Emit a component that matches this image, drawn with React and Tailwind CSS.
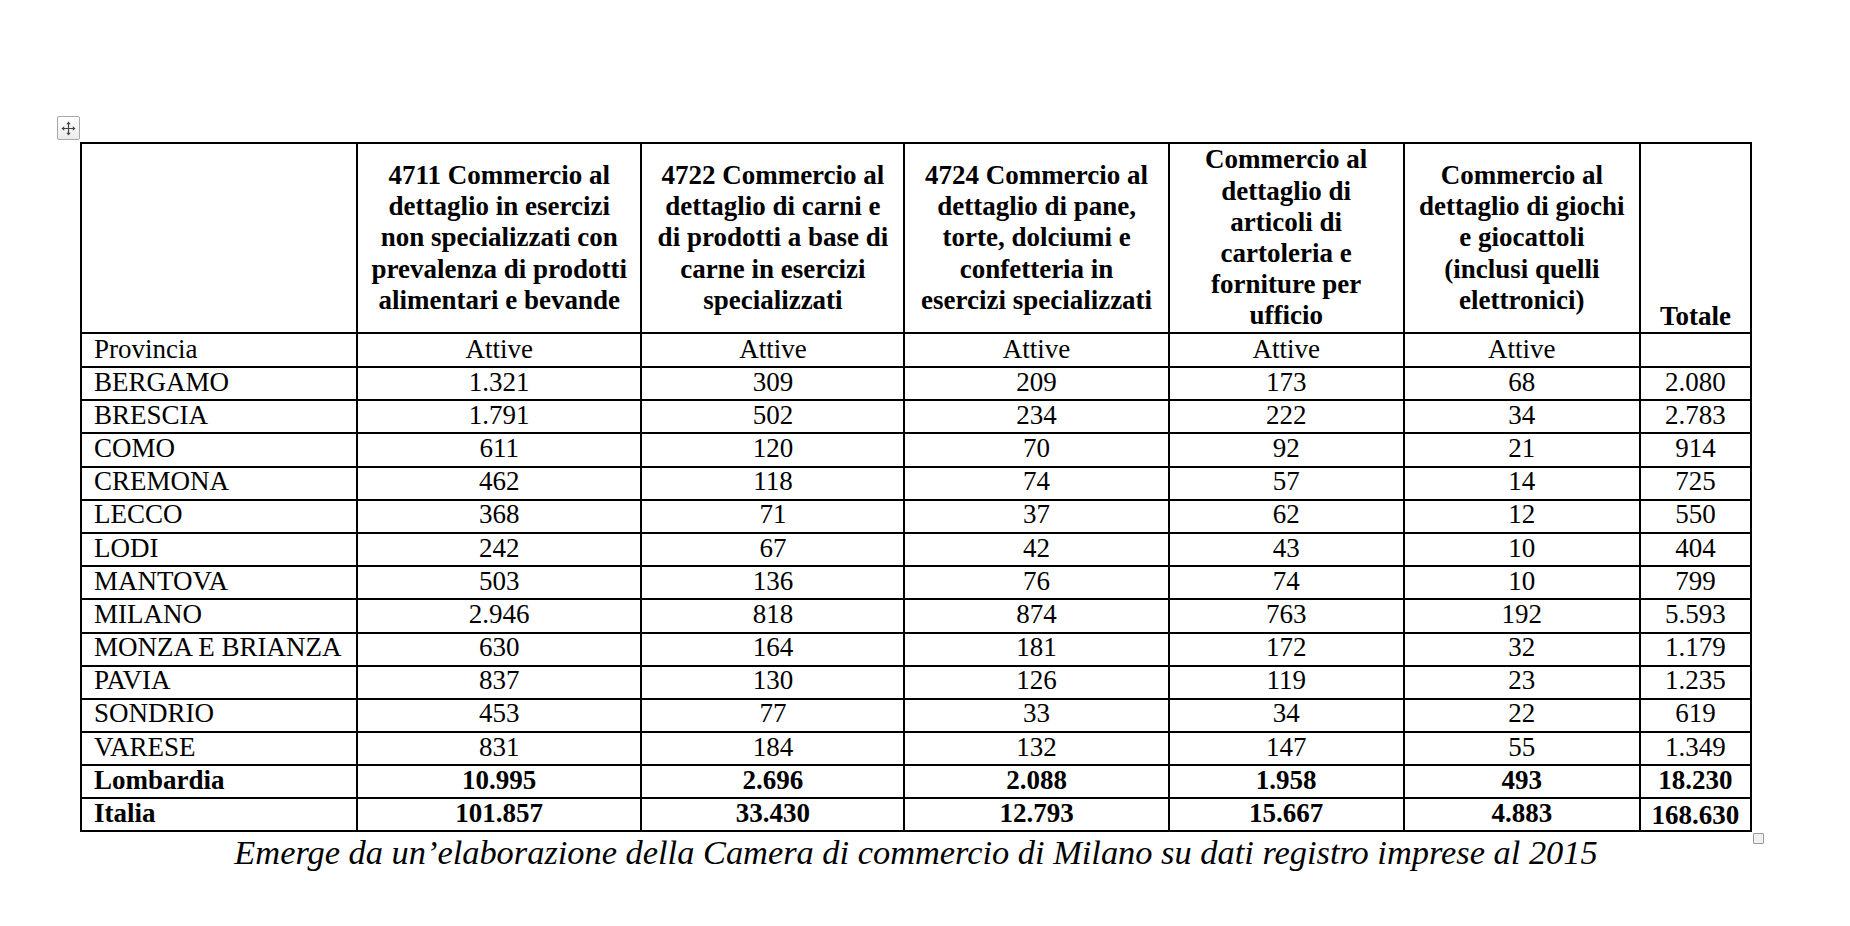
import React from "react";

const headers = [
  ["4711 Commercio al", "dettaglio in esercizi", "non specializzati con", "prevalenza di prodotti", "alimentari e bevande"],
  ["4722 Commercio al", "dettaglio di carni e", "di prodotti a base di", "carne in esercizi", "specializzati"],
  ["4724 Commercio al", "dettaglio di pane,", "torte, dolciumi e", "confetteria in", "esercizi specializzati"],
  ["Commercio al", "dettaglio di", "articoli di", "cartoleria e", "forniture per", "ufficio"],
  ["Commercio al", "dettaglio di giochi", "e giocattoli", "(inclusi quelli", "elettronici)"],
];

const rows = [
  ["BERGAMO", "1.321", "309", "209", "173", "68", "2.080"],
  ["BRESCIA", "1.791", "502", "234", "222", "34", "2.783"],
  ["COMO", "611", "120", "70", "92", "21", "914"],
  ["CREMONA", "462", "118", "74", "57", "14", "725"],
  ["LECCO", "368", "71", "37", "62", "12", "550"],
  ["LODI", "242", "67", "42", "43", "10", "404"],
  ["MANTOVA", "503", "136", "76", "74", "10", "799"],
  ["MILANO", "2.946", "818", "874", "763", "192", "5.593"],
  ["MONZA E BRIANZA", "630", "164", "181", "172", "32", "1.179"],
  ["PAVIA", "837", "130", "126", "119", "23", "1.235"],
  ["SONDRIO", "453", "77", "33", "34", "22", "619"],
  ["VARESE", "831", "184", "132", "147", "55", "1.349"],
];

const totals = [
  ["Lombardia", "10.995", "2.696", "2.088", "1.958", "493", "18.230"],
  ["Italia", "101.857", "33.430", "12.793", "15.667", "4.883", "168.630"],
];

const cell = "border-2 border-black p-0";

function MoveHandle() {
  return (
    <div className="absolute -left-[23px] -top-[26px] w-[23px] h-[24px] rounded-[2px] border border-[#a8a8a8] bg-gradient-to-b from-white to-[#ececec] flex items-center justify-center">
      <svg width="15" height="15" viewBox="0 0 15 15">
        <path d="M7.5 2v11M2 7.5h11" stroke="#444" strokeWidth="1.2" />
        <path d="M7.5 0.5L5.3 3.2h4.4zM7.5 14.5L5.3 11.8h4.4zM0.5 7.5L3.2 5.3v4.4zM14.5 7.5L11.8 5.3v4.4z" fill="#444" />
      </svg>
    </div>
  );
}

export default function App() {
  return (
    <div className="w-[1850px] h-[926px] bg-white font-['Liberation_Serif','Times_New_Roman',serif] text-black">
      <div className="pt-[142px] pl-[80px] w-fit">
        <div className="relative">
          <MoveHandle />
          <table className="table-fixed border-collapse w-[1672px] text-[27px]">
            <colgroup>
              <col className="w-[276px]" />
              <col className="w-[284px]" />
              <col className="w-[263px]" />
              <col className="w-[264px]" />
              <col className="w-[235px]" />
              <col className="w-[236px]" />
              <col className="w-[111px]" />
            </colgroup>
            <tbody>
              <tr className="h-[190px]">
                <td className={cell}></td>
                {headers.map((lines, i) => (
                  <td key={i} className={`${cell} text-center align-middle font-bold leading-[31.2px]`}>
                    {lines.map((l, j) => (
                      <div key={j} className="whitespace-nowrap">{l}</div>
                    ))}
                  </td>
                ))}
                <td className={`${cell} text-center align-bottom font-bold leading-[31.2px]`}>Totale</td>
              </tr>
              <tr className="h-[34px]">
                <td className={`${cell} pl-[12px] leading-[28px] pb-[2px]`}>Provincia</td>
                {[0, 1, 2, 3, 4].map((i) => (
                  <td key={i} className={`${cell} text-center leading-[28px] pb-[2px]`}>Attive</td>
                ))}
                <td className={cell}></td>
              </tr>
              {rows.map((r) => (
                <tr key={r[0]} className="h-[33.2px]">
                  {r.map((v, i) => (
                    <td key={i} className={`${cell} leading-[27px] pb-[3px] ${i === 0 ? "pl-[12px] whitespace-nowrap" : "text-center"}`}>
                      {v}
                    </td>
                  ))}
                </tr>
              ))}
              {totals.map((r, ri) => (
                <tr key={r[0]} className={ri === 0 ? "h-[32.3px]" : "h-[33.4px]"}>
                  {r.map((v, i) => (
                    <td
                      key={i}
                      className={`${cell} font-bold leading-[28px] ${i === 0 ? "pl-[12px]" : "text-center"} ${ri === 1 && i === 6 ? "pt-[2px]" : "pb-[2px]"}`}
                    >
                      {v}
                    </td>
                  ))}
                </tr>
              ))}
            </tbody>
          </table>
          <div className="absolute -right-[12px] -bottom-[12px] w-[11px] h-[11px] rounded-[1px] border border-[#999] bg-[#f0f0f0]"></div>
        </div>
        <p className="text-center italic text-[34.4px] leading-[40px]">
          Emerge da un’elaborazione della Camera di commercio di Milano su dati registro imprese al 2015
        </p>
      </div>
    </div>
  );
}
